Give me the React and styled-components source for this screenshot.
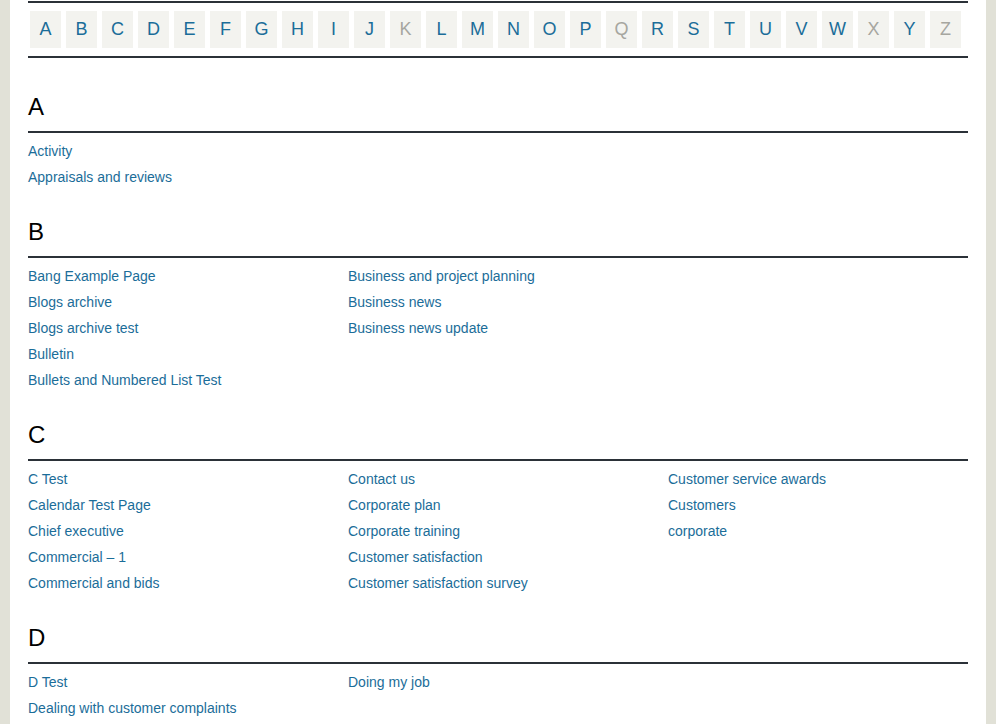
import React from "react";
import styled, { createGlobalStyle } from "styled-components";

const LETTERS = "ABCDEFGHIJKLMNOPQRSTUVWXYZ".split("");
const EMPTY = ["K", "Q", "X", "Z"];

const SECTIONS = [
  {
    letter: "A",
    columns: [["Activity", "Appraisals and reviews"]],
  },
  {
    letter: "B",
    columns: [
      [
        "Bang Example Page",
        "Blogs archive",
        "Blogs archive test",
        "Bulletin",
        "Bullets and Numbered List Test",
      ],
      ["Business and project planning", "Business news", "Business news update"],
    ],
  },
  {
    letter: "C",
    columns: [
      [
        "C Test",
        "Calendar Test Page",
        "Chief executive",
        "Commercial – 1",
        "Commercial and bids",
      ],
      [
        "Contact us",
        "Corporate plan",
        "Corporate training",
        "Customer satisfaction",
        "Customer satisfaction survey",
      ],
      ["Customer service awards", "Customers", "corporate"],
    ],
  },
  {
    letter: "D",
    columns: [["D Test", "Dealing with customer complaints"], ["Doing my job"]],
  },
];

export default function App() {
  return (
    <>
      <GlobalStyle />
      <Page>
        <AzNav>
          {LETTERS.map((l) => (
            <LetterBox key={l} $empty={EMPTY.includes(l)}>
              {l}
            </LetterBox>
          ))}
        </AzNav>
        {SECTIONS.map((section) => (
          <Section key={section.letter}>
            <Heading>{section.letter}</Heading>
            <Columns>
              {section.columns.map((col, i) => (
                <Column key={i}>
                  {col.map((item) => (
                    <Link key={item} href="#">
                      {item}
                    </Link>
                  ))}
                </Column>
              ))}
            </Columns>
          </Section>
        ))}
      </Page>
    </>
  );
}

const GlobalStyle = createGlobalStyle`
  html, body {
    margin: 0;
    padding: 0;
    background: #e1e1d7;
    font-family: "Liberation Sans", Arial, sans-serif;
  }
`;

const Page = styled.div`
  margin: 0 10px;
  padding: 1px 18px 40px;
  background: #ffffff;
  min-height: 724px;
  box-sizing: border-box;
`;

const AzNav = styled.nav`
  display: flex;
  gap: 5px;
  padding: 8px 2px;
  border-top: 2px solid #2b3138;
  border-bottom: 2px solid #2b3138;
`;

const LetterBox = styled.a`
  display: block;
  width: 31px;
  height: 37px;
  line-height: 37px;
  text-align: center;
  background: #f3f3ef;
  font-size: 18px;
  text-decoration: none;
  color: ${(p) => (p.$empty ? "#a6a69f" : "#1b6d99")};
`;

const Section = styled.section`
  margin-top: 28px;
  &:first-of-type {
    margin-top: 35px;
  }
`;

const Heading = styled.h2`
  margin: 0;
  padding-bottom: 10px;
  font-size: 24px;
  line-height: 28px;
  font-weight: normal;
  color: #000000;
  border-bottom: 2px solid #2b3138;
`;

const Columns = styled.div`
  display: flex;
  gap: 20px;
  padding-top: 5px;
`;

const Column = styled.div`
  display: flex;
  flex-direction: column;
  width: 300px;
`;

const Link = styled.a`
  display: block;
  font-size: 14px;
  line-height: 26px;
  color: #1b6d99;
  text-decoration: none;
  white-space: nowrap;
`;
